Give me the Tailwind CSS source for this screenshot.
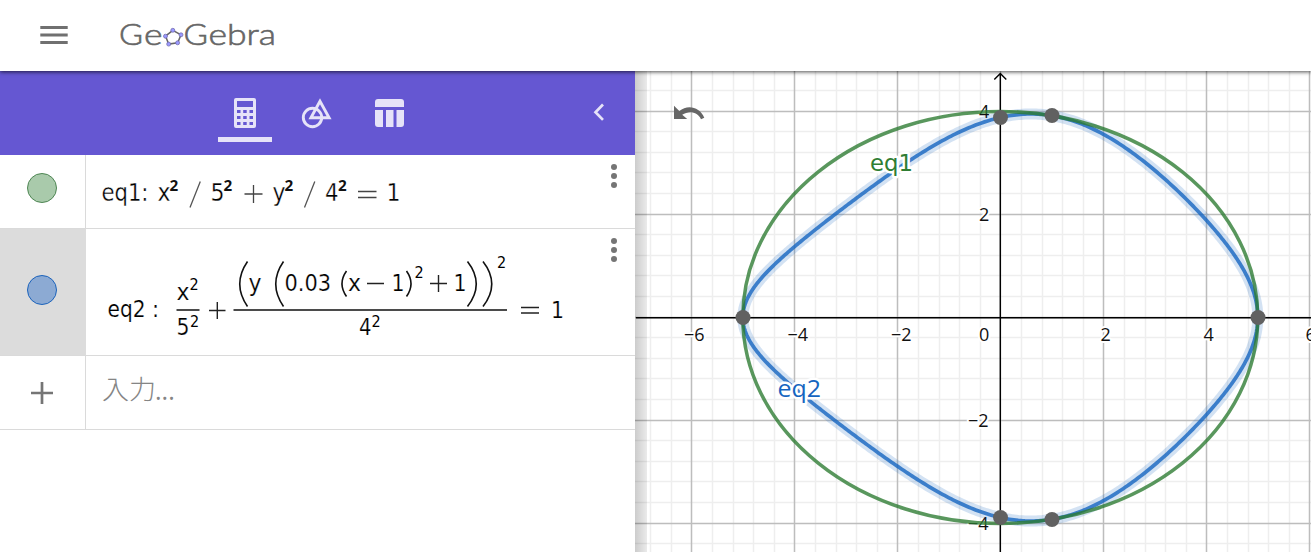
<!DOCTYPE html>
<html lang="ja">
<head>
<meta charset="utf-8">
<title>GeoGebra</title>
<script src="https://cdn.jsdelivr.net/npm/@tailwindcss/browser@4"></script>
</head>
<body class="h-[552px] w-[1311px] overflow-hidden bg-white flex flex-col">
<header class="relative z-10 h-[71px] pb-px shrink-0 flex items-center bg-white shadow-[0_1px_4px_rgba(0,0,0,0.7)]">
  <svg class="ml-[40px] w-7 h-5" viewBox="0 0 28 20" fill="#707070"><path d="M.3 1h27.4v3H.3zM.3 8.500h27.400v3H.3zM.3 16h27.400v3H.3z"/></svg>
  <svg class="ml-[47px] w-[170px] h-[50px]" viewBox="115 10 170 50">
    <g fill="#666" stroke="#666" stroke-width=".6" font-family="Lato" font-weight="300" font-size="30">
      <text x="119" y="45" textLength="24" lengthAdjust="spacingAndGlyphs">G</text>
      <text x="144" y="45" textLength="18.500" lengthAdjust="spacingAndGlyphs">e</text>
      <text x="183.500" y="45" textLength="24.500" lengthAdjust="spacingAndGlyphs">G</text>
      <text x="208.500" y="45" textLength="67.500" lengthAdjust="spacingAndGlyphs">ebra</text>
    </g>
    <path d="M172.800 30.300l8.200 4.500-3.300 8-9 1.300-3.200-8z" fill="none" stroke="#666" stroke-width="1.500"/>
    <g fill="#9999ff" stroke="#6d66a8" stroke-width=".7"><circle cx="172.800" cy="30.300" r="2"/><circle cx="181" cy="34.800" r="2"/><circle cx="177.600" cy="42.800" r="2"/><circle cx="168.700" cy="44.100" r="2"/><circle cx="165.500" cy="36.200" r="2"/></g>
  </svg>
</header>
<main class="flex flex-1 min-h-0">
  <section class="w-[635px] shrink-0 flex flex-col bg-white">
    <nav class="h-[84px] shrink-0 bg-[#6557d2] flex">
      <svg class="w-[635px] h-[84px]" viewBox="0 71 635 84">
        <g fill="#e6e3f8">
          <path fill-rule="evenodd" d="M236 98h18q2 0 2 2v26q0 2-2 2h-18q-2 0-2-2v-26q0-2 2-2zM237 101v6h16v-6zM237 110v3h3.500v-3zM243.200 110v3h3.500v-3zM249.500 110v3h3.500v-3zM237 116v3h3.500v-3zM243.200 116v3h3.500v-3zM249.500 116v3h3.500v-3zM237 122v3h3.500v-3zM243.200 122v3h3.500v-3zM249.500 122v3h3.500v-3z"/>
          <path d="M218 137h54v5h-54z"/>
          <path d="M378 99h23q3 0 3 3v5h-29v-5q0-3 3-3zM375 110h8v17h-5q-3 0-3-3zM386 110h7.500v17H386zM396.500 110h7.500v14q0 3-3 3h-4.500z"/>
        </g>
        <g fill="none" stroke="#e6e3f8" stroke-width="2.900"><circle cx="312.500" cy="117.500" r="9.200"/><path d="M320 101.300l-9.100 16.400h18.200z"/></g>
        <path d="M603 104.500l-7.500 7.700 7.500 7.700" fill="none" stroke="#e6e3f8" stroke-width="2.700"/>
      </svg>
    </nav>
    <div class="h-[74px] shrink-0 flex border-b border-[#dadada]">
      <div class="w-[86px] border-r border-[#dadada] pl-[27px] pt-[18px]"><div class="w-[30px] h-[30px] rounded-full border border-[#4f8654] bg-[#a9caab]"></div></div>
      <svg class="w-[549px] h-[73px]" viewBox="86 155 549 73">
        <g fill="#000" stroke="#fff" stroke-width=".3" font-family="DejaVu Sans Condensed,DejaVu Sans" font-size="24">
          <text x="101.500" y="200.700" textLength="47" lengthAdjust="spacingAndGlyphs">eq1:</text>
          <text x="157.500" y="200.700" textLength="13" lengthAdjust="spacingAndGlyphs">x</text>
          <text x="210.500" y="200.700" textLength="14" lengthAdjust="spacingAndGlyphs">5</text>
          <text x="272.500" y="200.700" textLength="13" lengthAdjust="spacingAndGlyphs">y</text>
          <text x="325" y="200.700" textLength="13.500" lengthAdjust="spacingAndGlyphs">4</text>
          <text x="386.500" y="200.700" textLength="14" lengthAdjust="spacingAndGlyphs">1</text>
        </g>
        <g fill="#111" font-family="Open Sans" font-weight="600" font-size="25"><text x="169.500" y="200.500">²</text><text x="223.500" y="200.500">²</text><text x="284.500" y="200.500">²</text><text x="338" y="200.500">²</text></g>
        <path d="M190 207.500l10.300-26M304.500 207.500l10.300-26" stroke="#555" stroke-width="1.300"/>
        <path d="M244.500 194h18M253.500 185v18M358 191.500h18.500M358 197.500h18.500" stroke="#444" stroke-width="1.300"/>
        <g fill="#757575"><circle cx="614" cy="167" r="3"/><circle cx="614" cy="176" r="3"/><circle cx="614" cy="185" r="3"/></g>
      </svg>
    </div>
    <div class="h-[127px] shrink-0 flex border-b border-[#dadada]">
      <div class="w-[86px] bg-[#dcdcdc] pl-[27px] pt-[46px]"><div class="w-[30px] h-[30px] rounded-full border border-[#1c63bb] bg-[#8caad3]"></div></div>
      <svg class="w-[549px] h-[126px]" viewBox="86 229 549 126">
        <g fill="#000" stroke="#fff" stroke-width=".2" font-family="DejaVu Sans Condensed,DejaVu Sans" font-size="23.500">
          <text x="107.500" y="317" textLength="38" lengthAdjust="spacingAndGlyphs">eq2</text>
          <text x="152" y="317">:</text>
          <text x="176.500" y="299.700" textLength="13" lengthAdjust="spacingAndGlyphs">x</text>
          <text x="176.500" y="334.500" textLength="13" lengthAdjust="spacingAndGlyphs">5</text>
          <text x="248.500" y="290.500" textLength="13" lengthAdjust="spacingAndGlyphs">y</text>
          <text x="284.500" y="290.500" textLength="46.500" lengthAdjust="spacingAndGlyphs">0.03</text>
          <text x="348" y="290.500" textLength="13" lengthAdjust="spacingAndGlyphs">x</text>
          <text x="391.500" y="290.500" textLength="13" lengthAdjust="spacingAndGlyphs">1</text>
          <text x="453.500" y="290.500" textLength="13" lengthAdjust="spacingAndGlyphs">1</text>
          <text x="359" y="334.500" textLength="12.500" lengthAdjust="spacingAndGlyphs">4</text>
          <text x="551" y="317.500" textLength="13" lengthAdjust="spacingAndGlyphs">1</text>
        </g>
        <g fill="#000" font-family="DejaVu Sans Condensed,DejaVu Sans" font-size="16">
          <text x="189.500" y="290.300">2</text><text x="190" y="326.500">2</text><text x="414.500" y="277.500">2</text><text x="497" y="268">2</text><text x="371.500" y="326.500">2</text>
        </g>
        <path d="M176.500 310h23M233.500 310h273.500" stroke="#111" stroke-width="1.400"/>
        <path d="M209 310.500h16.500M217.300 302v17M367 283.500h17M430 283.500h17M438.500 275v17M521 307.500h18M521 313h18" stroke="#222" stroke-width="1.400"/>
        <g fill="none" stroke="#111" stroke-width="1.600">
          <path d="M247.500 261.500q-15.500 22.500 0 45M283.500 261.500q-15.500 22.500 0 45M467.500 261.500q17.500 22.500 0 45M483 261.500q17.500 22.500 0 45"/>
          <path d="M346.500 271q-9 12.700 0 25.500M406.500 271q9 12.700 0 25.500"/>
        </g>
        <g fill="#757575"><circle cx="614" cy="241" r="3"/><circle cx="614" cy="250" r="3"/><circle cx="614" cy="259" r="3"/></g>
      </svg>
    </div>
    <div class="h-[74px] shrink-0 flex border-b border-[#dadada]">
      <div class="w-[86px] border-r border-[#dadada] flex justify-center pt-[26px]"><svg class="w-[22px] h-[22px] -ml-px" viewBox="0 0 22 22"><path d="M0 11h22M11 0v22" stroke="#757575" stroke-width="2.700"/></svg></div>
      <svg class="w-[549px] h-[73px]" viewBox="86 356 549 73"><text x="102" y="399" fill="#858585" font-family="Noto Sans CJK JP" font-weight="300" font-size="26" textLength="54" lengthAdjust="spacingAndGlyphs">入力</text><text x="155" y="400" fill="#858585" font-family="Open Sans" font-size="25">...</text></svg>
    </div>
  </section>
  <section class="flex-1 min-w-0 bg-white">
    <svg class="w-[676px] h-[481px]" viewBox="635 71 676 481">
      <defs><linearGradient id="edge"><stop offset="0" stop-opacity=".2"/><stop offset="1" stop-opacity=".08"/></linearGradient></defs>
      <path id="minor" stroke="#000" stroke-opacity=".065" stroke-width="1.500"/>
      <path id="major" stroke="#bdbdbd" stroke-width="1.500"/>
      <path d="M636 317.700H1311M1000.300 552V74M994.300 79.500L1000.300 73.500L1006.300 79.500" fill="none" stroke="#000" stroke-width="1.400"/>
      <g font-family="Open Sans" font-size="18" fill="#111" stroke="#fff" stroke-width="4" paint-order="stroke" stroke-linejoin="round">
        <text x="684" y="341">−6</text><text x="787.500" y="341">−4</text><text x="891" y="341">−2</text><text x="979" y="341">0</text><text x="1100.500" y="341">2</text><text x="1203.500" y="341">4</text><text x="1305.500" y="341">6</text>
        <text x="979" y="118">4</text><text x="979" y="221">2</text><text x="968" y="427">−2</text><text x="968" y="530">−4</text>
      </g>
      <path id="halo" fill="none" stroke="#1565c0" stroke-opacity=".19" stroke-width="11"/>
      <path id="curve" fill="none" stroke="#1565c0" stroke-opacity=".8" stroke-width="3.700"/>
      <ellipse cx="1000.300" cy="317.500" rx="257.500" ry="206" fill="none" stroke="#2a7a2f" stroke-opacity=".78" stroke-width="3.500"/>
      <g font-family="DejaVu Sans" font-size="22.500" stroke="#fff" stroke-width="5" paint-order="stroke" stroke-linejoin="round">
        <text x="870" y="171" fill="#2f7d33" textLength="43" lengthAdjust="spacingAndGlyphs">eq1</text>
        <text x="777.500" y="396.500" fill="#1565c0" font-family="Open Sans" font-size="24.500" textLength="43.500" lengthAdjust="spacingAndGlyphs">eq2</text>
      </g>
      <g fill="#616161"><circle cx="743" cy="317.500" r="7.500"/><circle cx="1258" cy="317.500" r="7.500"/><circle cx="1000.500" cy="117.500" r="7.500"/><circle cx="1052" cy="115.500" r="7.500"/><circle cx="1000.500" cy="517.500" r="7.500"/><circle cx="1052" cy="519.500" r="7.500"/></g>
      <path d="M674 105.800v13.200h13.200l-5-4.200c6.500-4.500 15.500-3.200 18.800 4.400l3.300-1.500c-4.500-11.200-17-13.500-25-6.700z" fill="#666"/>
      <rect x="635" y="71" width="12" height="481" fill="url(#edge)"/>
    </svg>
  </section>
</main>
<script>
const unit = 51.5, ox = 1000.3, oy = 317.5;
let minor = '', major = '';
for (let i = -18; i <= 16; i++) {
  const x = Math.round(ox + i * 0.4 * unit) + 0.5, y = Math.round(oy + i * 0.4 * unit) - 0.5;
  const xs = `M${x} 71V552`, ys = `M635 ${y}H1311`;
  if (i % 5 === 0) { major += xs + ys; } else { minor += xs + ys; }
}
document.getElementById('minor').setAttribute('d', minor);
document.getElementById('major').setAttribute('d', major);
let d = '';
for (let k = 0; k <= 720; k++) {
  const t = k * Math.PI / 360, x = 5 * Math.cos(t);
  const y = 4 * Math.sin(t) / (0.03 * (x - 1) ** 2 + 1);
  d += (k ? 'L' : 'M') + (ox + unit * x).toFixed(2) + ' ' + (oy - unit * y).toFixed(2);
}
for (const id of ['halo', 'curve']) document.getElementById(id).setAttribute('d', d + 'Z');
</script>
</body>
</html>
